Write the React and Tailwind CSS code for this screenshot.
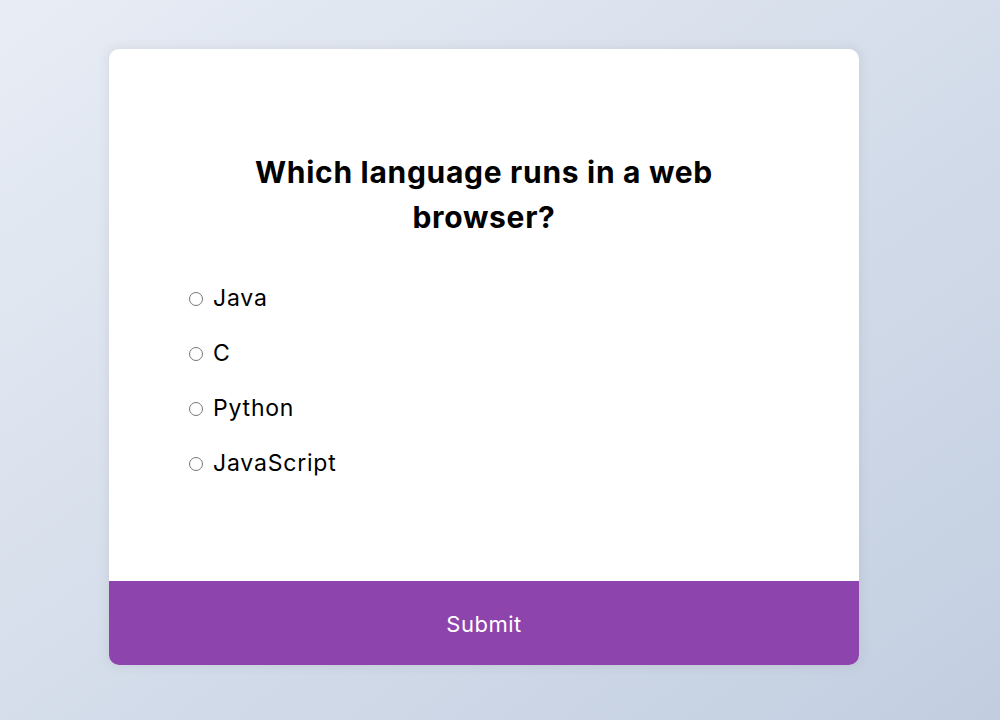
const QUESTION = {
  text: 'Which language runs in a web browser?',
  options: ['Java', 'C', 'Python', 'JavaScript'],
}

export default function App() {
  return (
    <div className="min-h-screen w-full bg-linear-to-br from-[#e8edf5] to-[#c2cee0] font-['Inter','Noto_Sans',sans-serif]">
      <div className="pt-[49px] pl-[109px]">
        <div className="w-[750px] overflow-hidden rounded-[10px] bg-white shadow-[0_0_10px_2px_rgba(100,100,100,0.1)]">
          {/* question + answers */}
          <div className="p-[80px]">
            <h2 className="px-[20px] pt-[21px] pb-[21px] text-center text-[30px] font-bold leading-[45px] tracking-[0.7px] text-black">
              {QUESTION.text}
            </h2>
            <ul className="my-[20px] flex flex-col gap-[20px]">
              {QUESTION.options.map((opt) => (
                <li key={opt} className="flex h-[35px] items-center text-[23px] tracking-[0.8px] text-black">
                  <span className="mr-[10px] h-[14px] w-[14px] shrink-0 rounded-full border border-[#767676] bg-white" />
                  <span>{opt}</span>
                </li>
              ))}
            </ul>
          </div>
          <button className="block h-[84px] w-full bg-[#8e44ad] pt-[2px] text-[22px] tracking-[0.5px] text-white">
            Submit
          </button>
        </div>
      </div>
    </div>
  )
}
